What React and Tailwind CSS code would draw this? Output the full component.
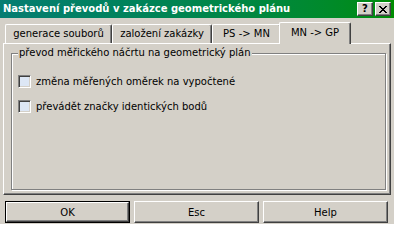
import React from "react";

function Checkbox({ label }) {
  return (
    <div className="flex items-center h-[13px]">
      <div className="w-[13px] h-[13px] border-t border-l border-[#808080] border-r border-b border-r-white border-b-white shadow-[inset_1px_1px_0_#404040,inset_-1px_-1px_0_#d4d0c8] bg-[#dde7f5]" />
      <span className="ml-[5px] leading-[13px]">{label}</span>
    </div>
  );
}

function Button({ children, def }) {
  if (def) {
    return (
      <div className="w-[125px] h-[22px] border border-black">
        <div className="w-full h-full flex items-center justify-center border-t border-l border-white border-r border-b border-r-[#404040] border-b-[#404040] shadow-[inset_-1px_-1px_0_#808080]">
          {children}
        </div>
      </div>
    );
  }
  return (
    <div className="w-[125px] h-[22px] flex items-center justify-center border-t border-l border-white border-r border-b border-r-[#404040] border-b-[#404040] shadow-[inset_-1px_-1px_0_#808080]">
      {children}
    </div>
  );
}

function Tab({ w, children, active }) {
  if (active) {
    return (
      <div className="relative z-10 -mx-[2px] -mb-[1px] h-[22px] w-[72px] bg-[#d4d0c8] flex items-center justify-center pb-[3px] border-t border-l border-white border-r border-r-[#404040] rounded-t-[2px] shadow-[inset_-1px_0_0_#808080]">
        {children}
      </div>
    );
  }
  return (
    <div
      style={{ width: w }}
      className="h-[19px] flex items-center justify-center pb-[1px] border-t border-l border-white border-r border-r-[#404040] rounded-t-[2px] shadow-[inset_-1px_0_0_#808080]"
    >
      {children}
    </div>
  );
}

export default function App() {
  return (
    <div className="w-[394px] h-[224px] bg-[#d4d0c8] flex flex-col overflow-hidden font-['DejaVu_Sans',Verdana,sans-serif] text-[10px] text-black">
      {/* Title bar */}
      <div className="h-[18px] flex items-center pl-[3px] pr-[3px] bg-linear-to-r from-[#077d72] to-[#008c00]">
        <span className="font-bold text-white text-[10px] leading-[18px]">
          Nastavení převodů v zakázce geometrického plánu
        </span>
        <div className="ml-auto flex gap-[2px]">
          <div className="w-[16px] h-[14px] flex items-center justify-center bg-[#d4d0c8] border-t border-l border-white border-r border-b border-r-[#404040] border-b-[#404040] shadow-[inset_-1px_-1px_0_#808080] font-bold text-[10px] leading-none">
            ?
          </div>
          <div className="w-[16px] h-[14px] flex items-center justify-center bg-[#d4d0c8] border-t border-l border-white border-r border-b border-r-[#404040] border-b-[#404040] shadow-[inset_-1px_-1px_0_#808080]">
            <svg width="8" height="7" viewBox="0 0 8 7" shapeRendering="crispEdges">
              <path d="M0 0h2v1h-2zM6 0h2v1h-2zM1 1h2v1h-2zM5 1h2v1h-2zM2 2h4v1h-4zM3 3h2v1h-2zM2 4h4v1h-4zM1 5h2v1h-2zM5 5h2v1h-2zM0 6h2v1h-2zM6 6h2v1h-2z" fill="#000" />
            </svg>
          </div>
        </div>
      </div>

      {/* Tabs */}
      <div className="mt-[4px] h-[21px] ml-[5px] flex items-end">
        <Tab w="107px">generace souborů</Tab>
        <Tab w="100px">založení zakázky</Tab>
        <Tab w="69px">PS -&gt; MN</Tab>
        <Tab active>MN -&gt; GP</Tab>
      </div>

      {/* Panel */}
      <div className="ml-[3px] w-[388px] h-[152px] flex border-t border-l border-white border-r border-b border-r-[#404040] border-b-[#404040] shadow-[inset_-1px_-1px_0_#808080] pl-[7px] pt-[9px] pr-[4px] pb-[4px]">
        <div className="relative flex-1 border border-[#808080] shadow-[inset_1px_1px_0_#fff,1px_1px_0_#fff]">
          <span className="absolute left-[6px] -top-[8px] px-[1px] bg-[#d4d0c8] leading-[14px]">
            převod měřického náčrtu na geometrický plán
          </span>
          <div className="pl-[6px] pt-[21px] flex flex-col gap-[12px]">
            <Checkbox label="změna měřených oměrek na vypočtené" />
            <Checkbox label="převádět značky identických bodů" />
          </div>
        </div>
      </div>

      {/* Buttons */}
      <div className="mt-[6px] ml-[5px] flex gap-[4px]">
        <Button def>OK</Button>
        <Button>Esc</Button>
        <Button>Help</Button>
      </div>
    </div>
  );
}
